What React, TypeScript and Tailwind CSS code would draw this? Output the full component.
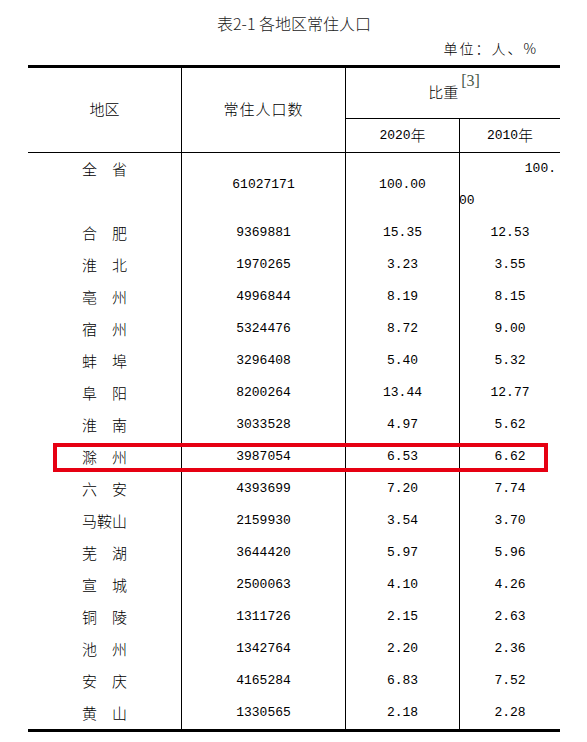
const rows = [
  ["合肥", "9369881", "15.35", "12.53"],
  ["淮北", "1970265", "3.23", "3.55"],
  ["亳州", "4996844", "8.19", "8.15"],
  ["宿州", "5324476", "8.72", "9.00"],
  ["蚌埠", "3296408", "5.40", "5.32"],
  ["阜阳", "8200264", "13.44", "12.77"],
  ["淮南", "3033528", "4.97", "5.62"],
  ["滁州", "3987054", "6.53", "6.62"],
  ["六安", "4393699", "7.20", "7.74"],
  ["马鞍山", "2159930", "3.54", "3.70"],
  ["芜湖", "3644420", "5.97", "5.96"],
  ["宣城", "2500063", "4.10", "4.26"],
  ["铜陵", "1311726", "2.15", "2.63"],
  ["池州", "1342764", "2.20", "2.36"],
  ["安庆", "4165284", "6.83", "7.52"],
  ["黄山", "1330565", "2.18", "2.28"],
];

const cjk = "font-['Noto_Sans_CJK_SC',sans-serif]";
const num = "font-['Liberation_Mono',monospace] text-[13px]";

// two-character names get a full-width space between them
const spaced = (name: string) =>
  name.length === 2 ? name[0] + "\u3000" + name[1] : name;

const App = () => {
  return (
    <div className="relative w-[587px] h-[742px] bg-white text-black pl-[28px] pr-[27px]">
      {/* Title */}
      <div className={`${cjk} text-center pt-[13px] text-[16px] leading-[20px] font-light text-[#222]`}>
        表2-1 各地区常住人口
      </div>

      {/* Unit */}
      <div className={`${cjk} mt-[5px] mb-[7px] text-right pr-[22px] text-[14px] leading-[20px] font-light tracking-[2px]`}>
        单位：人、%
      </div>

      {/* Table */}
      <div className="border-t-[3px] border-b-[3px] border-black">
        {/* Header */}
        <div className={`${cjk} flex h-[85px] border-b border-black text-[15px] font-light`}>
          <div className="w-[154px] border-r border-black flex items-center justify-center pb-[2px]">
            地区
          </div>
          <div className="w-[164px] border-r border-black flex items-center justify-center pb-[2px] tracking-[1px]">
            常住人口数
          </div>
          <div className="flex-1 flex flex-col">
            <div className="h-[51px] border-b border-black flex items-start justify-center pl-[2px] pt-[4px]">
              <span className="mt-[10px] leading-[20px]">比重</span>
              <span className="font-['Liberation_Serif',serif] text-[16px] leading-[18px] text-[#4a5a4a] ml-[3px]">
                [3]
              </span>
            </div>
            <div className="flex flex-1">
              <div className="w-[114px] border-r border-black flex items-center justify-center">
                <span className={num}>2020</span>年
              </div>
              <div className="flex-1 flex items-center justify-center">
                <span className={num}>2010</span>年
              </div>
            </div>
          </div>
        </div>

        {/* 全省 row */}
        <div className="flex h-[64px]">
          <div className={`${cjk} w-[154px] border-r border-black text-center pt-[6px] text-[15px] leading-[20px] font-light`}>
            全　省
          </div>
          <div className={`${num} w-[164px] border-r border-black flex items-center justify-center`}>
            61027171
          </div>
          <div className={`${num} w-[114px] border-r border-black flex items-center justify-center`}>
            100.00
          </div>
          <div className={`${num} flex-1 overflow-hidden flex flex-col leading-[20px]`}>
            <div className="text-right pr-[4px] pt-[6px]">100.</div>
            <div className="mt-[12px] -ml-[1px]">00</div>
          </div>
        </div>

        {/* Region rows */}
        {rows.map(([name, pop, p20, p10]) => (
          <div key={name} className="flex h-[32px]">
            <div className={`${cjk} w-[154px] border-r border-black flex items-center justify-center text-[15px] font-light`}>
              {spaced(name)}
            </div>
            <div className={`${num} w-[164px] border-r border-black flex items-center justify-center`}>
              {pop}
            </div>
            <div className={`${num} w-[114px] border-r border-black flex items-center justify-center`}>
              {p20}
            </div>
            <div className={`${num} flex-1 flex items-center justify-center`}>
              {p10}
            </div>
          </div>
        ))}
      </div>

      {/* Highlight box over 滁州 */}
      <div className="absolute left-[53px] top-[443px] w-[495px] h-[29px] border-[4px] border-[#e60012]" />
    </div>
  );
};

export default App;
